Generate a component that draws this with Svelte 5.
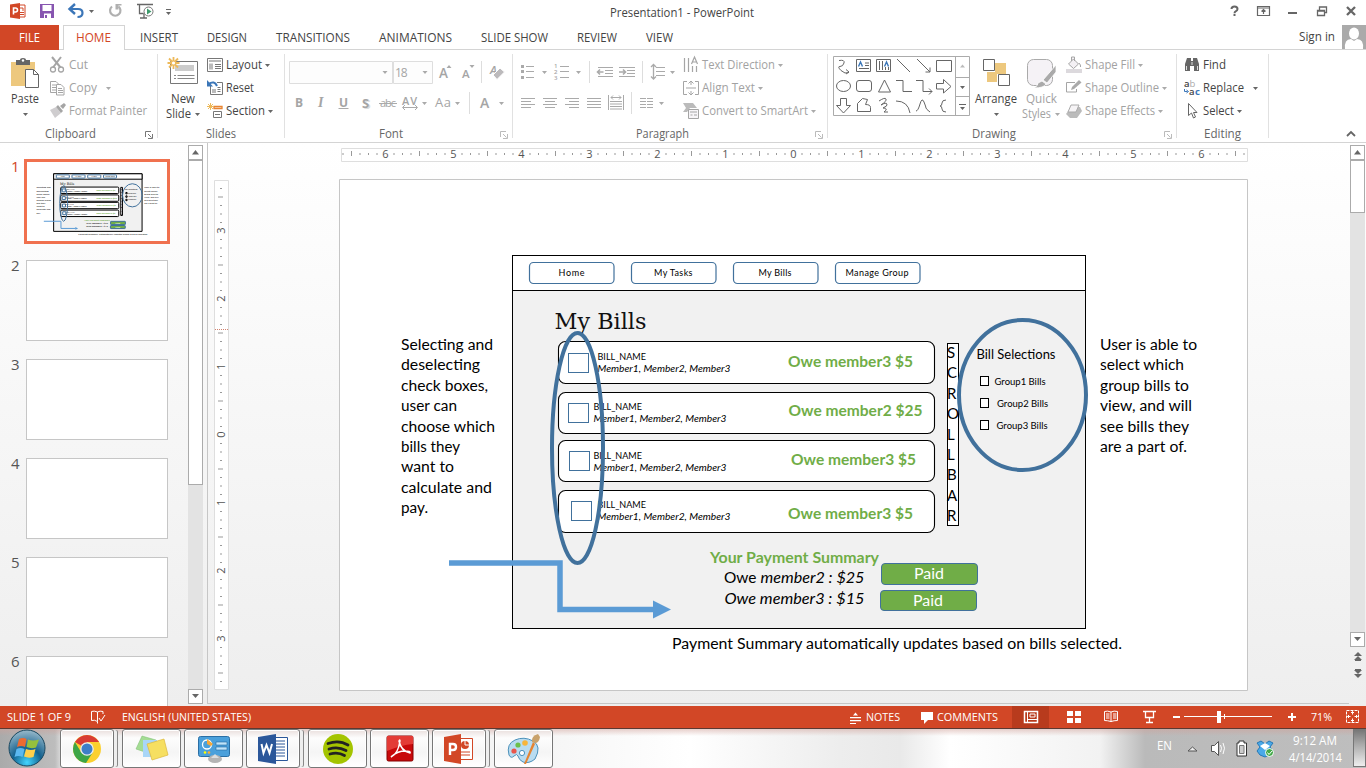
<script>
  const tabs = [['INSERT', 38], ['DESIGN', 40], ['TRANSITIONS', 74], ['ANIMATIONS', 73], ['SLIDE SHOW', 67], ['REVIEW', 40], ['VIEW', 27]];
  const left = [['Selecting and', 92], ['deselecting', 79], ['check boxes,', 87], ['user can', 56], ['choose which', 94], ['bills they', 59], ['want to', 53], ['calculate and', 91], ['pay.', 27]];
  const right = [['User is able to', 97], ['select which', 84], ['group bills to', 89], ['view, and will', 92], ['see bills they', 89], ['are a part of.', 87]];
  const nav = [['Home', 529, 558.5, 26], ['My Tasks', 631, 654, 38.5], ['My Bills', 733, 758.5, 33], ['Manage Group', 835, 845.5, 63]];
  const bills = [
    { y: 341.5, h: 42, bx: 568.5, by: 353.5, tx: 597.5, ty: 360, o: 'Owe member3 $5', ox: 788, oy: 367, ow: 125 },
    { y: 392.5, h: 41, bx: 568.5, by: 403.5, tx: 593.5, ty: 410, o: 'Owe member2 $25', ox: 788.5, oy: 416, ow: 134 },
    { y: 440.5, h: 41, bx: 569.5, by: 451.5, tx: 593.5, ty: 459, o: 'Owe member3 $5', ox: 791, oy: 465, ow: 125 },
    { y: 490.5, h: 42, bx: 571.5, by: 501.5, tx: 597.5, ty: 508, o: 'Owe member3 $5', ox: 788, oy: 519, ow: 125 }
  ];
  const groups = [['Group1 Bills', 994.5, 385], ['Group2 Bills', 997, 407], ['Group3 Bills', 996.5, 428.5]];
  const hticks = Array.from({ length: 107 }, (_, i) => i - 53).filter((i) => i % 8 !== 0);
  const vticks = Array.from({ length: 59 }, (_, i) => i - 29).filter((i) => i % 8 !== 0);
  const hnums = [-6, -5, -4, -3, -2, -1, 0, 1, 2, 3, 4, 5, 6];
  const vnums = [-3, -2, -1, 0, 1, 2, 3];
</script>

{#snippet t(text, w, cls = '')}
  <svg class="t {cls}" width={w} height="16"><text x="0" y="12" textLength={w} lengthAdjust="spacingAndGlyphs">{text}</text></svg>
{/snippet}

{#snippet arrow(cls = '')}
  <svg class="arrow {cls}" width="5" height="3"><path d="M0 0h5L2.5 3z" /></svg>
{/snippet}

{#snippet foot(text, w, launch, dim)}
  <div class="foot">
    <span class="footname">{@render t(text, w)}</span>
    {#if launch}
      <svg class="launch" class:dim width="8" height="8" fill="none"><path d="M.5 6V.5H6M3 3l3.5 3.5M7.5 3v4.500H3" /></svg>
    {/if}
  </div>
{/snippet}

{#snippet slideArt()}
  <g class="art">
    <rect x="512.5" y="255.500" width="573" height="373" fill="#f1f1f1" stroke="#000" />
    <rect x="512.500" y="255.500" width="573" height="35" fill="#fff" stroke="#000" />
    {#each nav as [name, x, tx, w]}
      <rect x={x + 0.5} y="262.5" width="84.500" height="21" rx="4" fill="#fff" stroke="#41719c" stroke-width="1.200" />
      <text x={tx} y="276" font-size="9" textLength={w}>{name}</text>
    {/each}
    <text class="serif" x="554.500" y="329" font-size="21.500" textLength="92" lengthAdjust="spacingAndGlyphs">My Bills</text>
    {#each bills as b}
      <rect x="558.500" y={b.y} width="376" height={b.h} rx="7" fill="#fff" stroke="#000" stroke-width="1.100" />
      <rect x={b.bx} y={b.by} width="20" height="19" fill="#fff" stroke="#41719c" />
      <text x={b.tx} y={b.ty} font-size="8.800" textLength="48.500" lengthAdjust="spacingAndGlyphs">BILL_NAME</text>
      <text x={b.tx} y={b.ty + 12} font-size="8.800" font-style="italic" textLength="133" lengthAdjust="spacingAndGlyphs">Member1, Member2, Member3</text>
      <text class="green" x={b.ox} y={b.oy} font-size="15.500" textLength={b.ow} lengthAdjust="spacingAndGlyphs">{b.o}</text>
    {/each}
    <rect x="947.500" y="343.500" width="11" height="182" fill="#fff" stroke="#000" />
    {#each 'SCROLLBAR'.split('') as c, i}
      <text x="947" y={358 + i * 20.4} font-size="15">{c}</text>
    {/each}
    <text x="976.500" y="359" font-size="12.500" textLength="79" lengthAdjust="spacingAndGlyphs">Bill Selections</text>
    {#each groups as [name, x, y], i}
      <rect x="980.500" y={376.5 + i * 22} width="8" height="9" fill="#fff" stroke="#000" />
      <text {x} {y} font-size="9" textLength="51" lengthAdjust="spacingAndGlyphs">{name}</text>
    {/each}
    <ellipse class="ring" cx="577.500" cy="448" rx="25.500" ry="115" />
    <ellipse class="ring" cx="1022.500" cy="395" rx="63.500" ry="75" />
    {#each left as [line, w], i}
      <text x="401" y={350 + i * 20.4} font-size="15.500" textLength={w} lengthAdjust="spacingAndGlyphs">{line}</text>
    {/each}
    {#each right as [line, w], i}
      <text x="1100" y={350 + i * 20.4} font-size="15.500" textLength={w} lengthAdjust="spacingAndGlyphs">{line}</text>
    {/each}
    <text class="green" x="710" y="563" font-size="15.500" textLength="169" lengthAdjust="spacingAndGlyphs">Your Payment Summary</text>
    <text x="724" y="583" font-size="15.500" textLength="32.500" lengthAdjust="spacingAndGlyphs">Owe</text>
    <text x="760.500" y="583" font-size="15.500" font-style="italic" textLength="104" lengthAdjust="spacingAndGlyphs">member2 : $25</text>
    <text x="724.500" y="603.500" font-size="15.500" font-style="italic" textLength="140" lengthAdjust="spacingAndGlyphs">Owe member3 : $15</text>
    <rect x="881.500" y="563.500" width="96" height="21" rx="3.500" fill="#70ad47" stroke="#41719c" />
    <rect x="880.500" y="590.500" width="96" height="20" rx="3.500" fill="#70ad47" stroke="#41719c" />
    <text class="white" x="914" y="579" font-size="15.500" textLength="30" lengthAdjust="spacingAndGlyphs">Paid</text>
    <text class="white" x="913" y="606" font-size="15.500" textLength="30" lengthAdjust="spacingAndGlyphs">Paid</text>
    <path class="conn" d="M449 563H560V609.500H655" />
    <path d="M653 600.500L671 609.500L653 618.500z" fill="#5b9bd5" />
    <text x="672" y="649" font-size="15.500" textLength="450" lengthAdjust="spacingAndGlyphs">Payment Summary automatically updates based on bills selected.</text>
  </g>
{/snippet}

<div class="app">
  <header class="title">
    <svg class="quick" width="180" height="25" fill="none">
      <path d="M18 5h7v12h-7" stroke="#d24726" fill="#fff" /><path d="M20 8h3v3M19 12.500h5M19 14.500h5" stroke="#d24726" />
      <path d="M10 4.500l10-1.500v16l-10-1.500z" fill="#d24726" /><path d="M13.500 14.500V8h2q2 0 2 2t-2 2h-2" stroke="#fff" stroke-width="1.600" />
      <path d="M40 4h14v14H40z" fill="#8755b0" /><path d="M42.500 5h9v6h-9zM44 13.500h7V18h-7z" fill="#fff" /><path d="M45 15h2v3h-2z" fill="#8755b0" />
      <path d="M70 9h8q4.500 0 4.500 4t-5 4" stroke="#3b76b8" stroke-width="2.200" /><path d="M75 4l-5.500 5 5.500 5" stroke="#3b76b8" stroke-width="2.400" />
      <path d="M89 10h5l-2.500 3z" fill="#666" />
      <path d="M112 6.500a5.200 5.200 0 1 0 6.500 0" stroke="#b0b0b0" stroke-width="2.200" /><path d="M115.500 4h6v1.500h-3l0 4h-3z" fill="#b0b0b0" />
      <path d="M137 4.500h16M139.500 5v8.500h4M144 13.500v4M140 18h7" stroke="#666" stroke-width="1.300" /><circle cx="148.500" cy="11.500" r="4.500" stroke="#777" fill="#fff" /><path d="M147 8.500l4.500 3-4.500 3z" fill="#3c9b6b" />
      <path d="M166 9.500h5" stroke="#666" /><path d="M166 12h5l-2.500 3z" fill="#666" />
    </svg>
    <span class="doc">{@render t('Presentation1 - PowerPoint', 144)}</span>
    <svg width="140" height="25" viewBox="1226 0 140 25" fill="none" stroke="#666">
      <path d="M1231.500 9q0-2.500 3-2.500t3 2.500q0 1.500-1.500 2.200t-1.500 2M1234.500 14v2" stroke-width="2" />
      <path d="M1257.500 6.500h12v9h-12zM1257 8h13M1263.500 14v-4.500M1261.500 11.500l2-2 2 2" stroke-width="1.200" />
      <path d="M1288 13h9" stroke-width="2" /><path d="M1317.500 10.500h7v5h-7zM1319.500 10V7h7v5.500h-2M1317 11h8M1319 7h8" stroke-width="1.300" />
      <path d="M1347 7l8 8M1355 7l-8 8" stroke-width="2.300" />
    </svg>
  </header>

  <nav class="tabs">
    <div class="file">{@render t('FILE', 21)}</div>
    <div class="home">{@render t('HOME', 35)}</div>
    <div class="rest">{#each tabs as [n, w]}{@render t(n, w)}{/each}</div>
    <div class="sign">{@render t('Sign in', 36)}
      <svg width="24" height="24"><path d="M0 0h24v24H0z" fill="#aaa" /><ellipse cx="12" cy="8.500" rx="5" ry="6" fill="#fff" /><path d="M3 24q-1-10 6-10l3 2 3-2q7 0 6 10z" fill="#fff" /></svg>
    </div>
  </nav>

  <section class="ribbon">
    <div class="group clip">
      <div class="body">
        <div class="big">
          <svg width="30" height="32" viewBox="12 56 30 32"><path d="M13 62h24v24H13z" fill="#edc87e" /><path d="M18 60h4q0-2 3-2t3 2h4v5H18z" fill="#666" /><circle cx="25" cy="60.500" r="1.200" fill="#fff" /><path d="M27.500 69.500h8l5 5v13h-13z" fill="#fff" stroke="#666" /><path d="M35.500 69.500v5h5" fill="none" stroke="#666" /></svg>
          {@render t('Paste', 28)}{@render arrow()}
        </div>
        <div class="rows dim">
          <div class="row"><svg width="16" height="16" viewBox="50 57 16 16" fill="none" stroke="#a5a5a5" stroke-width="1.300"><path d="M52 57l8.500 10.500M61 57l-8 10.500" stroke-width="2" /><circle cx="53" cy="69.500" r="2.500" /><circle cx="61" cy="69.500" r="2.500" /></svg>{@render t('Cut', 19)}</div>
          <div class="row"><svg width="16" height="16" fill="#fff" stroke="#a5a5a5"><path d="M.5 1.500H6L8.500 4v8.500h-8zM2 5h4M2 7.500h4M2 10h4" /><path d="M6.500 4.500H11l3 3v7.500H6.500zM8 8.500h4M8 10.500h5M8 12.500h5" /></svg>{@render t('Copy', 28)}<span class="wide">{@render arrow()}</span></div>
          <div class="row"><svg width="16" height="16"><path d="M0 7l6-3 5 6-6 5z" fill="#cfcdcf" /><path d="M6 4l2-2 5 6-2 2zM10 3l4-3 2 2-3 4z" fill="#a5a5a5" /></svg>{@render t('Format Painter', 78)}</div>
        </div>
      </div>
      {@render foot('Clipboard', 51, true, false)}
    </div>

    <div class="group slides">
      <div class="body">
        <div class="big">
          <svg width="32" height="32" viewBox="166 55 32 32" fill="none"><path d="M169.500 60.500h27v22h-27z" fill="#fff" stroke="#777" /><path d="M174 64h19v6h-19z" fill="#ccc" /><path d="M173 74.500h2m1.500 0h17M173 77.500h2m1.500 0h17" stroke="#888" /><path d="M172.500 56v12M166.500 62h12M168 57.500l9 9M177 57.500l-9 9" stroke="#edb95a" stroke-width="1.800" /><circle cx="172.500" cy="62" r="1.600" fill="#fff" /></svg>
          {@render t('New', 24)}<span class="pair">{@render t('Slide', 25)}{@render arrow()}</span>
        </div>
        <div class="rows">
          <div class="row"><svg width="16" height="16" fill="none" stroke="#777"><path d="M.5 1.500h15v13H.5z" /><path d="M2 3h12v2H2zM2 6.500h4v6H2z" fill="#bbb" stroke="none" /><path d="M8 7.500h6M8 9.500h6M8 11.500h6" /></svg>{@render t('Layout', 36)}{@render arrow()}</div>
          <div class="row"><svg width="16" height="16" fill="none" stroke="#777"><path d="M3.500 5v9.500h12v-12H10" /><path d="M5 9h4v4H5z" fill="#bbb" stroke="none" /><path d="M10.500 7.500h3M10.500 9.500h3M10.500 11.500h3" /><path d="M1.500 4q6-4 8.500 2" stroke="#3b76b8" stroke-width="2" /><path d="M0 0v6.500h6z" fill="#3b76b8" stroke="none" /></svg>{@render t('Reset', 28)}</div>
          <div class="row"><svg width="16" height="16" fill="none" stroke="#777"><path d="M6.500 8.500h8v6h-8zM8 11.500h5" /><path d="M7 3.500h8v2H7z" stroke="#e88532" stroke-width="1.300" /><path d="M3.500 0v7M0 3.500h7M1 1l5 5M6 1L1 6" stroke="#edb95a" /></svg>{@render t('Section', 39)}{@render arrow()}</div>
        </div>
      </div>
      {@render foot('Slides', 30, false, false)}
    </div>

    <div class="group font">
      <div class="body">
        <svg class="tools" width="227" height="70" viewBox="285 54 227 70" fill="none" stroke="#aaa">
          <path d="M289.500 61.500h103v22h-103zM393.500 61.500h39v22h-39z" stroke="#dedede" fill="#fdfdfd" />
          <g class="g"><text x="395" y="77" textLength="12.500">18</text><text x="439" y="78" font-size="13.500" font-weight="600">A</text><text x="462" y="78" font-size="11.500" font-weight="600">A</text><text x="490" y="74" font-size="11.500" font-weight="600" font-style="italic">A</text>
            <text x="295" y="107" font-weight="700">B</text><text x="318" y="107" font-family="Liberation Serif" font-size="14" font-weight="700" font-style="italic">I</text><text x="339" y="107" font-weight="700">U</text><text x="363.500" y="109" font-weight="700" font-size="13" style:fill="#ddd">S</text><text x="362" y="107.500" font-weight="700" font-size="13">S</text><text x="380" y="107" font-size="11" textLength="16">abc</text><text x="402" y="104.500" font-size="11" textLength="15" font-weight="600">AV</text><text x="435" y="107" font-size="13" textLength="16">Aa</text><text x="480" y="108" font-size="14" font-weight="600">A</text></g>
          <path d="M382.500 71h5l-2.500 3zM422.500 71h5l-2.500 3zM446.500 68h5l-2.500-3zM469.500 65h5l-2.500 3zM422 102h5l-2.500 3zM455 102h5l-2.500 3zM499 102h5l-2.500 3z" fill="#aaa" stroke="none" />
          <path d="M338.500 108.500h10M379 103.500h18M403 107.500h14M405 105l-2.500 2.500 2.500 2.500M415 105l2.500 2.500-2.500 2.500" />
          <path d="M481.500 61v22M469.500 92v22" stroke="#ddd" /><path d="M493 75l7-7 4.500 4-7.500 7.500z" fill="#bcbabc" stroke="#fff" />
        </svg>
      </div>
      {@render foot('Font', 24, true, true)}
    </div>

    <div class="group para">
      <div class="body">
        <svg class="tools" width="170" height="70" viewBox="513 54 170 70" fill="none" stroke="#aaa">
          <path d="M526 66.500h8M526 71.500h8M526 77.500h8M560 66.500h9M560 71.500h9M560 77.500h9M598 67.500h15M605 70.500h8M605 73.500h8M598 76.500h15M619 67.500h16M627 70.500h8M627 73.500h8M619 76.500h16M656 67.500h9M656 71.500h9M656 75.500h9" />
          <path d="M521 65h3v3h-3zM521 70h3v3h-3zM521 76h3v3h-3zM542 71h5l-2.500 3zM576 71h5l-2.500 3zM670 71h5l-2.500 3zM659 102h5l-2.500 3z" fill="#aaa" stroke="none" />
          <path d="M597.500 72h6M600 69.500l-2.500 2.500 2.500 2.500M619 72h6M623 69.500l2.500 2.500-2.500 2.500" stroke-width="1.600" /><path d="M653.500 64.500v14M651 67l2.500-2.500L656 67M651 76.500l2.500 2.500 2.500-2.500" stroke-width="1.300" />
          <path d="M521 98.500h14M521 101.500h10M521 104.500h14M521 107.500h10M543 98.500h14M545 101.500h10M543 104.500h14M545 107.500h10M565 98.500h14M569 101.500h10M565 104.500h14M569 107.500h10M587 98.500h14M587 101.500h14M587 104.500h14M587 107.500h14M608.500 95v15M623.500 95v15M610 101.500h12M610 104h12M610 106.500h12M610 109h12M611 97.500h10M640 98.500h6M640 101.500h6M640 104.500h6M640 107.500h6M647 98.500h6M647 101.500h6M647 104.500h6M647 107.500h6" />
          <path d="M613 95.500l-2 2 2 2M619 95.500l2 2-2 2" /><path d="M589.500 61v22M642.500 61v22M631.500 92v22" stroke="#ddd" />
          <g class="g" font-weight="600"><text x="554" y="68" font-size="6">1</text><text x="554" y="74" font-size="6">2</text><text x="554" y="80" font-size="6">3</text></g>
        </svg>
        <div class="rows dim">
          <div class="row"><svg width="16" height="16" fill="none" stroke="#a5a5a5"><path d="M1.500 1v14M5.500 1v14M9.500 9v6M13.500 9v6M8.500 7L11.500 0l3 7M9.500 5h4" stroke-width="1.200" /></svg>{@render t('Text Direction', 73)}{@render arrow()}</div>
          <div class="row"><svg width="16" height="16" fill="none" stroke="#a5a5a5"><path d="M4 1.500H.5v13H4M12 1.500h3.500v13H12M3 8h10M8 5V1M5.500 3.500L8 1l2.500 2.500M8 11v4M5.500 12.500L8 15l2.500-2.500" /></svg>{@render t('Align Text', 53)}{@render arrow()}</div>
          <div class="row"><svg width="16" height="16" fill="#f7f5f8" stroke="#a5a5a5"><path d="M0 0h10l4 5H7L4 9H0l3-4z" fill="#bbb" stroke="none" /><path d="M5.500 6.500h10v9h-10zM7 9h7M7.500 12h2M11 12h3" /></svg>{@render t('Convert to SmartArt', 106)}{@render arrow()}</div>
        </div>
      </div>
      {@render foot('Paragraph', 53, true, true)}
    </div>

    <div class="group draw">
      <div class="body">
        <svg class="tools" width="142" height="70" viewBox="828 54 142 70" fill="none" stroke="#666">
          <path d="M833.500 56.500h136v59h-136zM955.500 56v60M955 77.500h14M955 96.500h14" stroke="#ababab" />
          <path d="M960 67.500h5l-2.500-3z" fill="#bbb" stroke="none" /><path d="M960 86h5l-2.500 3zM960 107h5l-2.500 3z" fill="#666" stroke="none" /><path d="M959 104.500h7" />
          <path d="M839 60.500q6-1 5 2.500t-4 3.500 1 4 8 2M846 69.500l3 2.500-3 2" /><path d="M856.500 59.500h14v12h-14zM865 63h4M865 65.500h4M859 68.500h10M876.500 59.500h14v12h-14zM879.500 61v9M882.500 61v9M885.500 67v3M888.500 67v3" />
          <path d="M858.500 66.500l2-4.500 2 4.500M884.500 66.500l2-4.500 2 4.500" stroke="#3b76b8" stroke-width="1.400" />
          <path d="M897 59l13 13M917 59l13 13M930 67.500v4.500h-4.500M936.500 60.500h15v11h-15z" /><ellipse cx="843.500" cy="86" rx="7" ry="5.500" /><rect x="856.500" y="80.500" width="15" height="11" rx="2.500" />
          <path d="M878.500 92L884.500 80l6 12zM896 80.500h7v11h9M916 80.500h7v11h9M929 88.500l3 3-3 3M936.500 83.500h7v-4l7.500 7-7.500 6.500v-4h-7zM840.500 98.500h6v7h4l-7 7.500-7-7.500h4zM857.500 111.500v-8l5-5 5 1-2 5q5 0 5 3v4zM879 101q6-4 7-2t-5 6q5-3 6-1t-4 4q6 0 1 4h4M896 101q12 0 14 12M916 111q2 0 4-7t4-2 2 6 4 4M946 100q-4 0-4 3 0 3-2 3 2 0 2 3 0 3 4 3" />
        </svg>
        <div class="big arrange"><svg width="28" height="32" viewBox="981 55 28 32"><path d="M994 62h11v11h-9v8h-10V71h8z" fill="#edc87e" /><path d="M982.500 58.500h11v11h-11zM997.500 73.500h11v11h-11z" fill="#fff" stroke="#666" /></svg>{@render t('Arrange', 42)}{@render arrow()}</div>
        <div class="big styles dim"><svg width="32" height="32" viewBox="1026 56 32 32"><rect x="1028.500" y="59.500" width="25" height="26" rx="6" fill="#f5f2f6" stroke="#aaa" /><path d="M1057 65v7l-9 11-4-3zM1043 81l4 3q-2 4-12 4 4-2 4-5z" fill="#aaa" stroke="#fff" stroke-width=".8" /></svg>{@render t('Quick', 31)}<span class="pair">{@render t('Styles', 29)}{@render arrow()}</span></div>
        <div class="rows dim">
          <div class="row"><svg width="16" height="16" fill="#f3f0f4" stroke="#a5a5a5"><path d="M0 12h16v4H0z" stroke="none" fill="#dcd9dd" /><path d="M2.500 7l5-5 5 5-5 4.500zM5.500 4V0h3v4M13 6q2 2 1.500 4" /></svg>{@render t('Shape Fill', 50)}{@render arrow()}</div>
          <div class="row"><svg width="16" height="16" fill="none" stroke="#a5a5a5"><path d="M9 2.500H.5V12h10V9" /><path d="M5 10l1-3 7-7 2.500 2.500-7.500 6.500z" fill="#aaa" stroke="none" /></svg>{@render t('Shape Outline', 74)}{@render arrow()}</div>
          <div class="row"><svg width="16" height="16"><path d="M5 4h9l2 4-5 7H4L0 11z" fill="#bbb" /><path d="M5 2h8l-3 7H2z" fill="#f6f4f6" stroke="#aaa" /></svg>{@render t('Shape Effects', 70)}{@render arrow()}</div>
        </div>
      </div>
      {@render foot('Drawing', 44, true, true)}
    </div>

    <div class="group edit">
      <div class="body">
        <div class="rows">
          <div class="row"><svg width="16" height="16"><path d="M3 1h4v3h2V1h4l2 6v7h-5V9H6v5H1V7z" fill="#666" /><path d="M2.500 9v4M13.500 9v4M8 5v3" stroke="#ddd" /></svg>{@render t('Find', 23)}</div>
          <div class="row"><svg width="16" height="18" class="g dark"><text x="0" y="7.500" font-size="9.500" font-weight="600">a</text><text x="5.500" y="7.500" font-size="9.500">b</text><text x="5" y="15.500" font-size="9.500" font-weight="600">a</text><text x="11" y="15.500" font-size="9.500" font-weight="700">c</text><path d="M.5 10v2.500h3M2.500 11l2 1.500-2 1.500" fill="none" stroke="#3b76b8" /></svg>{@render t('Replace', 41)}<span class="wide">{@render arrow()}</span></div>
          <div class="row"><svg width="16" height="16"><path d="M4.500.5v12l3-2.500 2 5 2-1-2-4.500h3.500z" fill="#fff" stroke="#666" /></svg>{@render t('Select', 31)}{@render arrow()}</div>
        </div>
      </div>
      {@render foot('Editing', 37, false, false)}
    </div>
    <svg class="collapse" width="10" height="6"><path d="M1 5l4-4 4 4" fill="none" stroke="#666" stroke-width="1.800" /></svg>
  </section>

  <main>
    <aside>
      <div class="thumb on"><span>1</span><div class="card"><svg class="mini" width="140" height="79" viewBox="340 180 907 510">{@render slideArt()}</svg></div></div>
      {#each [2, 3, 4, 5, 6] as n}
        <div class="thumb"><span>{n}</span><div class="card"></div></div>
      {/each}
    </aside>
    <div class="scroll sleft">
      <div class="btn"><svg width="8" height="5"><path d="M0 4.500h7L3.500 0z" /></svg></div>
      <div class="knob"></div>
      <div class="btn end"><svg width="8" height="5"><path d="M0 0h7L3.500 4z" /></svg></div>
    </div>
    <div class="editor">
      <svg class="hruler" width="907" height="14" viewBox="341 148 907 14">
        <path d="M341.500 148.500h906v13h-906z" fill="#fff" stroke="#dedede" />
        {#each hticks as i}<rect x={793.5 + i * 8.5 - 0.5} y={i % 4 === 0 ? 151 : 153} width="1" height={i % 4 === 0 ? 5 : 2} fill="#999" />{/each}
        {#each hnums as n}<text x={793.5 + n * 68} y="158" text-anchor="middle">{Math.abs(n)}</text>{/each}
      </svg>
      <div class="desk">
        <svg class="vruler" width="15" height="510" viewBox="214 180 15 510">
          <path d="M214.500 180.500h14v509h-14z" fill="#fff" stroke="#dedede" />
          {#each vticks as i}<rect x={i % 4 === 0 ? 218 : 220} y={434.5 + i * 8.5} width={i % 4 === 0 ? 5 : 2} height="1" fill="#999" />{/each}
          {#each vnums as n}<text transform="translate(225 {434.5 + n * 68}) rotate(-90)" text-anchor="middle">{Math.abs(n)}</text>{/each}
          <path d="M215 329.500h13" stroke="#d2826f" stroke-dasharray="1 1" />
        </svg>
        <svg class="slide" width="909" height="512" viewBox="339 179 909 512">
          <path d="M339.500 179.500h908v511h-908z" fill="#fff" stroke="#c6c6c6" />
          {@render slideArt()}
        </svg>
      </div>
    </div>
    <div class="scroll sright">
      <div class="btn"><svg width="8" height="5"><path d="M0 4.500h7L3.500 0z" /></svg></div>
      <div class="knob"></div>
      <div class="btn end"><svg width="8" height="5"><path d="M0 0h7L3.500 4z" /></svg></div>
      <svg class="pages" width="16" height="36" fill="#666"><path d="M4 9h8L8 5zM4 13h8l-4-4zM5 13h6v1H5zM4 23h8l-4 4zM4 27h8l-4 4zM5 22h6v1H5z" /></svg>
    </div>
  </main>

  <footer class="status">
    {@render t('SLIDE 1 OF 9', 64)}
    <svg class="book" width="16" height="16" fill="none" stroke="#fff"><path d="M7.500 3Q4 1.500 1.500 2.500v9q3-1 6 1zM7.500 3Q10 1.500 13 2.500V5M7.500 12.500v2M9 9l2 3 4-6" /></svg>
    {@render t('ENGLISH (UNITED STATES)', 129)}
    <div class="tools2">
      <svg width="12" height="14" class="fillw"><path d="M3 5.500h5L5.500 2.500zM0 7h11v1.300H0zM0 10h11v1.300H0zM0 13h6v1H0z" /></svg>{@render t('NOTES', 34)}
      <svg class="cm fillw" width="12" height="14"><path d="M0 2h12v8H7l-4 4v-4H0z" /></svg>{@render t('COMMENTS', 61)}
      <div class="active"><svg width="14" height="12" fill="none" stroke="#fff"><path d="M.500 .500h13v11H.500z" stroke-width="1.500" /><path d="M3.500 1v10M4 8.500h9" /><path d="M6 3h5v3H6z" /></svg></div>
      <svg width="148" height="22" viewBox="1055 706 148 22" fill="none" stroke="#fff" class="views"><path d="M1067 711h6v5h-6zM1075 711h6v5h-6zM1067 718h6v5h-6zM1075 718h6v5h-6z" fill="#fff" stroke="none" /><path d="M1104.500 711.500q3-1 6.500.500 3-1.500 6.500-.500v9q-3.500 0-6.500 1-3.500-1-6.500-1zM1111 712v10M1106 714h3.500M1106 716h3.500M1106 718h3.500M1113 714h3.500M1113 716h3.500M1113 718h3.500" /><path d="M1143 711.500h13M1145.500 712v5.500h8V712M1149.500 718v4M1146 722.500h7" stroke-width="1.300" /><path d="M1173 717h7" stroke-width="2" /><path d="M1184 716.500h19" /></svg>
      <svg width="95" height="22" viewBox="1203 706 95 22" stroke="#fff"><path d="M1203 716.500h69M1224.500 714v5" /><path d="M1219 711v12" stroke-width="4" /><path d="M1288 717h8M1292 713v8" stroke-width="2" /></svg>
      <span class="pct">{@render t('71%', 21)}</span>
      <svg width="14" height="14" fill="none" stroke="#fff"><path d="M.500 .500h12v12H.500z" stroke-dasharray="3 1" /><path d="M6.500 1.500v3M6.500 8.500v3M1.500 6.500h3M8.500 6.500h3M5 3l1.500-1.500L8 3M5 10l1.500 1.500L8 10M3 5L1.500 6.500 3 8M10 5l1.500 1.500L10 8" /></svg>
    </div>
  </footer>

  <footer class="taskbar">
    <svg class="orb" width="60" height="40" viewBox="0 728 60 40">
      <defs><radialGradient id="orb" cx=".5" cy=".9" r=".9"><stop offset="0" stop-color="#42d5ff" /><stop offset=".45" stop-color="#14628f" /><stop offset="1" stop-color="#9abacb" /></radialGradient></defs>
      <circle cx="27" cy="748" r="18" fill="url(#orb)" stroke="#19475f" />
      <path d="M19 739q4-2 7.500 0l-1.500 8q-4-2-8 0z" fill="#ec6b31" /><path d="M28 739.500q5 2 11 0l-3 8q-5 1.500-9.500-.500z" fill="#96c13d" /><path d="M16.500 749q4-2 8 0l-2 8q-4-2-8 0z" fill="#5cb8ef" /><path d="M26 749q5 2 9.500 0l-2 8q-5 1.500-9.500-.500z" fill="#ffd04b" />
    </svg>
    <div class="task multi"><svg width="30" height="30"><circle cx="15" cy="15" r="14" fill="#fbd02f" /><path d="M15 15L2.900 8A14 14 0 0 1 27.100 8H15z" fill="#d93c33" /><path d="M2.900 8A14 14 0 0 0 14 29l7-11-12 0z" fill="#3da547" /><circle cx="15" cy="15" r="6.800" fill="#eee" /><circle cx="15" cy="15" r="5.500" fill="#3d7fc8" /></svg></div>
    <div class="task"><svg width="34" height="30"><path d="M7 2l14 4-5 14-15-5z" fill="#a4dc94" stroke="#78bb6d" stroke-width=".5" /><path d="M8 6h14v17H8z" fill="#a9d6f8" /><path d="M12 10l17-5 4 16-16 5z" fill="#f6df61" stroke="#ddb83b" stroke-width=".7" /></svg></div>
    <div class="task"><svg width="34" height="30"><rect x="1.500" y="2.500" width="31" height="20" rx="2" fill="#4ba0db" stroke="#2b6fa5" /><circle cx="10" cy="10.500" r="4.500" fill="none" stroke="#fff" stroke-width="1.300" /><path d="M10 10V5l6 5-2 2z" fill="#f6a839" /><path d="M19 8h11v3H19zM19 13h11v3H19z" fill="#bfe4fa" stroke="#2568a1" stroke-width=".6" /><circle cx="8" cy="18.500" r="1.300" fill="#ff0" /><circle cx="12" cy="18.500" r="1.300" fill="#fa3" /><ellipse cx="18" cy="25" rx="7" ry="4" fill="#b4b4b4" /><path d="M14 24l4-4 4 4" fill="#ddd" /></svg></div>
    <div class="task multi"><svg width="32" height="30"><path d="M16.500 3.500h14v23h-14z" fill="#fff" stroke="#2b579a" /><path d="M18 7h10M18 10h10M18 13h10M18 16h10M18 19h10M18 22h10" stroke="#2b579a" /><path d="M1 3L19 0v30L1 27z" fill="#2b579a" /><path d="M4.500 10l2 9 3-8 3 8 2.500-9" fill="none" stroke="#fff" stroke-width="2" /></svg></div>
    <div class="task"><svg width="32" height="32"><circle cx="16" cy="16" r="15" fill="#a4c400" /><path d="M6 10.500q11-4 20 1.500M7 16q9-3 17 1.500M8 21q8-2.500 14.500 1.500" fill="none" stroke="#222" stroke-width="2.800" stroke-linecap="round" /></svg></div>
    <div class="task"><svg width="28" height="28"><rect x="1" y="1" width="26" height="25" rx="1.500" fill="#c8090b" stroke="#850000" /><path d="M1 1h26v8Q15 10 1 16z" fill="#e33b36" /><path d="M5 22q7-3 9-16 0-2-1 0 2 10 11 12 1-2-5-2-7 0-13 5z" fill="none" stroke="#fff" stroke-width="1.500" /></svg></div>
    <div class="task multi"><svg width="32" height="30"><path d="M16.500 4.500h13v21h-13z" fill="#fff" stroke="#d24726" /><circle cx="22" cy="11" r="4" fill="#d24726" /><path d="M22 11V7M22 11h4" stroke="#fff" /><path d="M18 18h9M18 21h9" stroke="#d24726" /><path d="M1 3L18 0v30L1 27z" fill="#d24726" /><path d="M7 21V10h3q3 0 3 3t-3 3H7" fill="none" stroke="#fff" stroke-width="2.400" /></svg></div>
    <div class="task"><svg width="34" height="32"><path d="M2 22Q-1 11 8 7t18 1 2 18q-6 5-12 3-4-2-5-6-1-3-4 0t-5-1z" fill="#b9dcf0" stroke="#4c91ba" /><circle cx="7" cy="18" r="2.600" fill="#e9564b" /><circle cx="11" cy="12" r="2.600" fill="#6cc04a" /><circle cx="18" cy="10" r="2.800" fill="#f8b53a" /><circle cx="15" cy="20" r="2.600" fill="#fff" stroke="#4c91ba" /><path d="M26 9l2 2-9 20-2 0z" fill="#e58431" /><path d="M25 9q-1-6 6-8l2 3q-1 6-5 6z" fill="#c9a26c" /></svg></div>
    <div class="tray">
      <span class="en">{@render t('EN', 15)}</span>
      <svg width="96" height="30" viewBox="1184 733 96 30" fill="#eee" stroke="#555">
        <path d="M1188 751h9l-4.500-4z" /><path d="M1211.500 745.500h3l4-4v14l-4-4h-3z" fill="#fff" /><path d="M1220.500 745q2 3 0 7M1223 743q3 5 0 11" fill="none" stroke="#fff" /><path d="M1239 741h5v2h2.500v13h-9.500v-13h2z" fill="#fff" stroke="#333" /><path d="M1239.500 745.500h4.500v8h-4.500z" fill="#ccc" stroke="#777" />
        <path d="M1257 743l4-2 4 3 4-3 4 2-3 4 3 4-4 4-4 2-5-2-3-4 3-4z" fill="#4aa9e8" stroke="#2678b5" /><path d="M1260 746l5-3 5 3-5 4z" fill="#fff" stroke="none" /><circle cx="1269.500" cy="752.500" r="4" fill="#42a948" stroke="#fff" /><path d="M1267.500 752.500l1.500 2 3-3.500" fill="none" stroke="#fff" />
      </svg>
      <div class="clock">{@render t('9:12 AM', 44)}{@render t('4/14/2014', 53)}</div>
      <div class="peek"></div>
    </div>
  </footer>
</div>

<style>
  :global(body) { margin: 0; overflow: hidden; }
  .app { width: 1366px; height: 768px; display: flex; flex-direction: column; background: #fff; font-family: "Open Sans", "Noto Sans", sans-serif; font-size: 12px; color: #444; overflow: hidden; }
  svg { display: block; flex: none; overflow: visible; }
  .t { fill: #444; }
  .g text { fill: #a5a5a5; stroke: none; }
  .dark text { fill: #444; }
  .dark text:nth-of-type(2) { fill: #aaa; }
  .dark text:nth-of-type(4) { fill: #3b76b8; }
  .arrow { fill: #666; }
  .dim .t { fill: #a2a2a2; }
  .dim .arrow { fill: #aaa; }
  .title { height: 25px; display: flex; flex: none; }
  .doc { margin: 5px auto 0 430px; }
  .tabs { height: 24px; flex: none; display: flex; border-bottom: 1px solid #d4d4d4; }
  .file { width: 59px; height: 25px; background: #d24726; display: flex; justify-content: center; padding-top: 5px; box-sizing: border-box; }
  .file .t { fill: #fff; }
  .home { width: 62px; height: 25px; box-sizing: border-box; margin-left: 4px; border: 1px solid #d4d4d4; border-bottom: 0; background: #fff; display: flex; padding: 4px 0 0 12px; }
  .home .t { fill: #d24726; }
  .rest { display: flex; gap: 29px; padding: 5px 0 0 15px; }
  .sign { display: flex; margin-left: auto; gap: 7px; }
  .sign .t { margin-top: 4px; }
  .ribbon { height: 92px; flex: none; display: flex; border-bottom: 1px solid #d4d4d4; }
  .group { box-sizing: border-box; height: 84px; margin-top: 4px; border-right: 1px solid #e1e1e1; display: flex; flex-direction: column; }
  .clip { width: 158px; }
  .slides { width: 127px; }
  .font { width: 228px; }
  .para { width: 315px; }
  .draw { width: 349px; }
  .edit { width: 92px; }
  .body { height: 70px; flex: none; display: flex; }
  .foot { display: flex; flex: none; height: 12px; margin-top: 2px; }
  .footname { flex: 1; display: flex; justify-content: center; }
  .foot .t { fill: #666; }
  .launch { margin: 5px 4px 0 4px; stroke: #777; }
  .launch.dim { stroke: #bbb; }
  .rows { display: flex; flex-direction: column; gap: 1px; }
  .row { display: flex; align-items: center; height: 22px; gap: 3px; }
  .row .t + .arrow { margin: 1px 0 0 0; }
  .wide { padding-left: 6px; }
  .big { display: flex; flex-direction: column; align-items: center; padding-top: 2px; }
  .big > .t { margin-top: 3px; }
  .big > .arrow { margin-top: 6px; }
  .pair { display: flex; gap: 4px; align-items: center; margin-top: -1px; }
  .clip .big { width: 30px; padding-left: 10px; margin-right: 10px; }
  .slides .big { width: 34px; padding-left: 8px; margin-right: 7px; }
  .arrange { width: 42px; margin-left: 5px; }
  .styles { width: 34px; margin: 0 8px 0 7px; }
  .edit .rows { padding-left: 7px; }
  .collapse { margin: 81px 10px 0 auto; }
  main { height: 563px; flex: none; display: flex; background: linear-gradient(#fff, #eee); overflow: hidden; }
  aside { width: 188px; height: 563px; overflow: hidden; display: flex; flex-direction: column; gap: 18px; box-sizing: border-box; padding-top: 16px; }
  .thumb { display: flex; height: 81px; flex: none; font-size: 15px; }
  .thumb span { width: 26px; padding-left: 11px; box-sizing: border-box; margin-top: -5px; line-height: 20px; color: #555; }
  .card { width: 142px; height: 81px; box-sizing: border-box; background: #fff; border: 1px solid #c6c6c6; }
  .on { height: 83px; }
  .on span { width: 24px; color: #d24726; margin-top: -3px; }
  .on .card { width: 146px; height: 85px; border: 3px solid #f0714f; }
  .mini .art > rect, .mini .art > ellipse, .mini .art > path { vector-effect: non-scaling-stroke; stroke-width: 1px; }
  .scroll { background: #e3e3e3; display: flex; flex-direction: column; box-sizing: border-box; }
  .scroll svg { fill: #666; }
  .btn { width: 15px; height: 15px; box-sizing: border-box; border: 1px solid #ababab; background: #fff; display: flex; align-items: center; justify-content: center; flex: none; }
  .knob { width: 15px; box-sizing: border-box; border: 1px solid #ababab; background: #fff; }
  .end { margin-top: auto; }
  .sleft { width: 15px; height: 559px; margin: 2px 4px 0 0; }
  .sleft .knob { height: 325px; }
  .editor { width: 1142px; box-sizing: border-box; border-left: 1px solid #c6c6c6; border-bottom: 1px solid #c6c6c6; height: 561px; padding-top: 5px; }
  .hruler { margin-left: 133px; }
  .hruler text, .vruler text { font-size: 11px; fill: #555; }
  .desk { display: flex; padding: 17px 0 0 6px; align-items: flex-start; }
  .vruler { margin-top: 1px; }
  .slide { margin-left: 110px; }
  .sright { width: 15px; height: 502px; margin: 2px 0 0 1px; }
  .sright .knob { height: 53px; }
  .pages { margin-bottom: -36px; }
  .art text { font-family: Lato, "Liberation Sans", sans-serif; fill: #000; }
  .art text.serif { font-family: "DejaVu Serif", serif; fill: #111; }
  .art text.green { fill: #70ad47; font-weight: 700; }
  .art text.white { fill: #fff; }
  .ring { fill: none; stroke: #41719c; stroke-width: 4; }
  .conn { fill: none; stroke: #5b9bd5; stroke-width: 5.5; }
  .status { height: 22px; flex: none; background: #d24726; display: flex; align-items: center; padding-left: 7px; font-size: 11.5px; }
  .status .t { fill: #fff; }
  .book { margin: 0 16px 0 19px; }
  .fillw { fill: #fff; }
  .tools2 { display: flex; align-items: center; margin-left: auto; gap: 4px; height: 22px; padding-right: 6px; }
  .cm { margin-left: 17px; }
  .active { width: 37px; height: 22px; background: #b83b1d; display: flex; align-items: center; justify-content: center; margin-left: 10px; }
  .tools2 .views { margin: 0 -4px 0 2px; }
  .pct { margin: 0 10px 0 9px; }
  .taskbar { height: 40px; flex: none; display: flex; box-sizing: border-box; border-top: 1px solid #5c3932; background: linear-gradient(#d0a09880, #fff0 7px), linear-gradient(90deg, #aaa 0, #bdbdbd 55px, #eee 65px, #f6f6f6 550px, #fff 690px, #ededed 840px, #e9e9e9 900px, #fff 950px, #f2f2f2 1100px, #bababa 1145px, #bebebe 1366px); }
  .orb { margin-top: -1px; }
  .task { width: 59px; height: 39px; box-sizing: border-box; border: 1px solid #777; border-radius: 3px; display: flex; align-items: center; justify-content: center; margin-right: 3px; background: linear-gradient(#eadfdd, #fdfdfd 8px, #f5f5f5 60%, #fff); box-shadow: inset 0 0 0 1px #fff; }
  .multi { width: 54px; margin-right: 8px; box-shadow: 4px 0 0 -1px #eee, 5px 0 0 -1px #888, inset 0 0 0 1px #fff; }
  .tray { margin-left: auto; display: flex; }
  .en { margin: 9px 12px 0 0; }
  .tray .t { fill: #fff; }
  .tray > svg { margin-top: 4px; }
  .clock { width: 70px; display: flex; flex-direction: column; align-items: center; gap: 1px; padding-top: 4px; }
  .peek { width: 13px; height: 38px; margin-left: 3px; box-sizing: border-box; border: 1px solid #777; background: linear-gradient(#777, #aaa 40%, #eee); }
</style>
